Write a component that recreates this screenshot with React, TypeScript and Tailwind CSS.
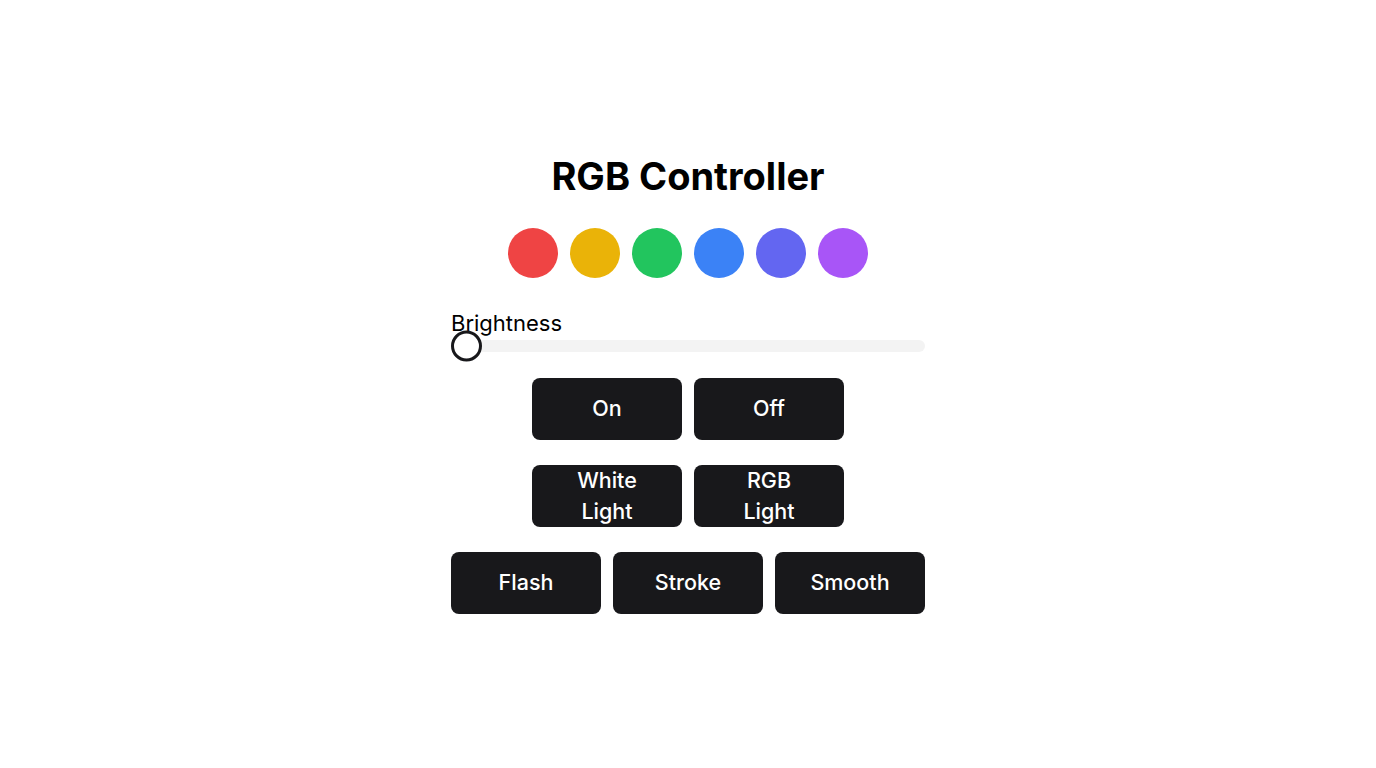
import { useState } from "react"

const colors = ["#ef4444", "#eab308", "#22c55e", "#3b82f6", "#6366f1", "#a855f7"]

function Btn({ label }: { label: string }) {
  return (
    <button className="w-[150px] h-[62px] px-8 rounded-lg bg-zinc-900 text-white text-[21.5px] leading-[31px] font-medium">
      {label}
    </button>
  )
}

export default function App() {
  const [brightness] = useState(0)

  return (
    <div
      className="min-h-screen flex items-center justify-center bg-white text-black"
      style={{ fontFamily: "Inter, 'Noto Sans', sans-serif" }}
    >
      <div className="w-[474px] flex flex-col items-center">
        <h1 className="text-[38px] leading-[42px] font-bold">RGB Controller</h1>

        <div className="mt-[31px] flex gap-3">
          {colors.map((c) => (
            <div key={c} className="w-[50px] h-[50px] rounded-full" style={{ backgroundColor: c }} />
          ))}
        </div>

        <div className="mt-[31px] w-full">
          <div className="text-[22px] leading-7">Brightness</div>
          <div className="relative mt-[3px] h-3 w-full rounded-full bg-[#f3f3f3]">
            <div
              className="absolute top-1/2 -translate-y-1/2 w-[31px] h-[31px] rounded-full border-[3px] border-zinc-900 bg-white"
              style={{ left: `${brightness}%` }}
            />
          </div>
        </div>

        <div className="mt-[26px] flex flex-col items-center gap-[25px]">
          <div className="flex gap-3">
            <Btn label="On" />
            <Btn label="Off" />
          </div>
          <div className="flex gap-3">
            <Btn label="White Light" />
            <Btn label="RGB Light" />
          </div>
          <div className="flex gap-3">
            <Btn label="Flash" />
            <Btn label="Stroke" />
            <Btn label="Smooth" />
          </div>
        </div>
      </div>
    </div>
  )
}
